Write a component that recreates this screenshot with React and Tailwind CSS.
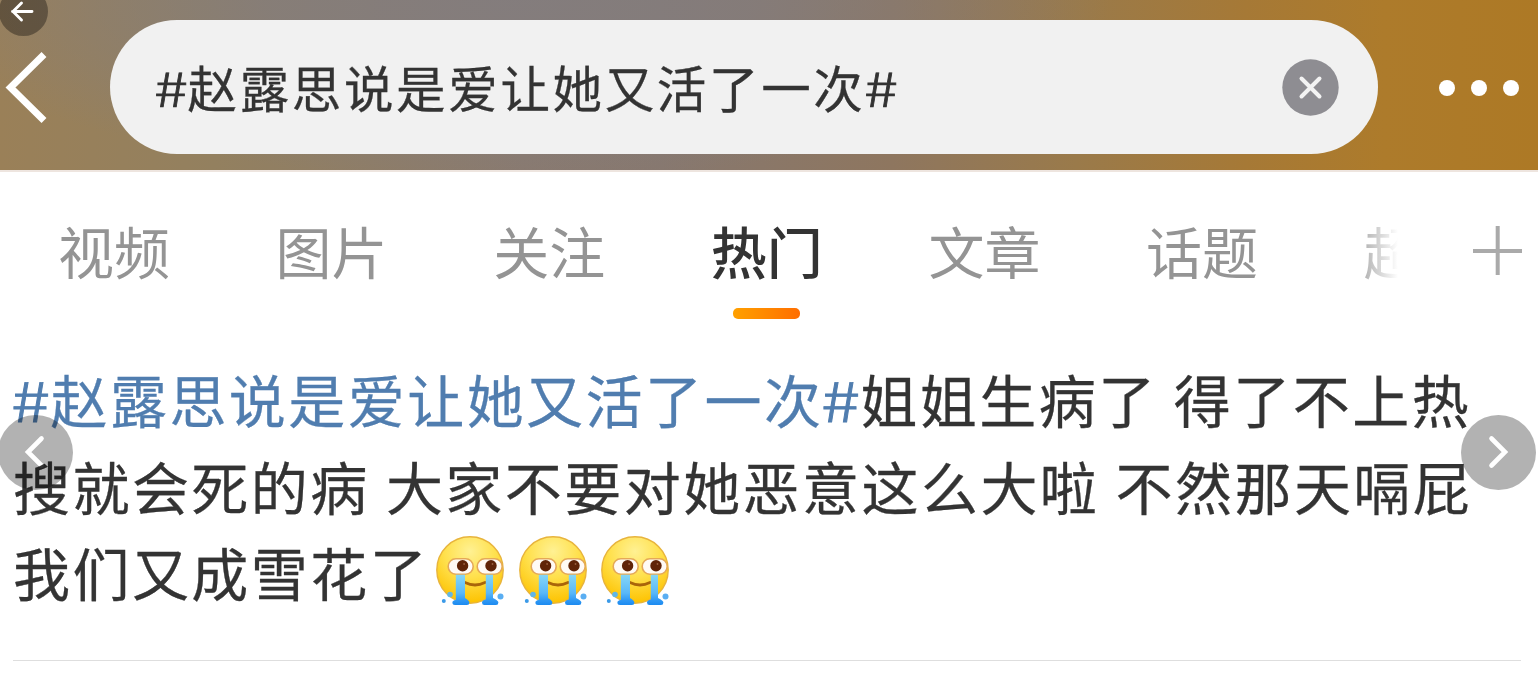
import React from "react";

const tabs = ["视频", "图片", "关注", "热门", "文章", "话题"];

function CryingFace({ id }) {
  return (
    <svg className="block h-[80px] w-[82.5px] shrink-0" viewBox="0 0 82.5 80" aria-hidden="true">
      <defs>
        <radialGradient id={`face${id}`} cx="50%" cy="22%" r="78%">
          <stop offset="0" stopColor="#fff193" />
          <stop offset="0.5" stopColor="#ffe04c" />
          <stop offset="1" stopColor="#fdc200" />
        </radialGradient>
        <linearGradient id={`tear${id}`} x1="0" y1="0" x2="0" y2="1">
          <stop offset="0" stopColor="#86d6f6" />
          <stop offset="0.6" stopColor="#5ab8f8" />
          <stop offset="0.85" stopColor="#2f98f4" />
          <stop offset="1" stopColor="#1c8af0" />
        </linearGradient>
      </defs>
      <circle cx="40" cy="39" r="33.2" fill={`url(#face${id})`} stroke="#e8b43c" strokeWidth="1.4" />
      <path d="M35 51.5 Q45 56.5 55 51.5" fill="none" stroke="#a9650a" strokeWidth="2.8" strokeLinecap="round" />
      <rect x="18.2" y="27.8" width="25" height="15.4" rx="7.7" fill="#fffaf5" stroke="#e5a957" strokeWidth="1.6" />
      <rect x="47.2" y="27.8" width="25" height="15.4" rx="7.7" fill="#fffaf5" stroke="#e5a957" strokeWidth="1.6" />
      <circle cx="32.6" cy="34.8" r="5.7" fill="#602408" />
      <circle cx="61" cy="34.8" r="5.7" fill="#602408" />
      <circle cx="34.1" cy="33" r="0.9" fill="#9a6040" />
      <circle cx="62.5" cy="33" r="0.9" fill="#9a6040" />
      <path d="M25.8 43.8 H35 V67 Q39.4 69.5 39.4 71.5 Q39.4 74 37 74 H25 Q22.4 74 22.4 71.5 Q22.4 69.5 25.8 69 Z" fill={`url(#tear${id})`} />
      <path d="M55.8 43.8 H63 V67 Q68.4 69.5 68.4 71.5 Q68.4 74 66 74 H54.4 Q52 74 52 71.5 Q52 69.5 55.8 68.5 Z" fill={`url(#tear${id})`} />
      <circle cx="20" cy="63.5" r="2.8" fill="#61b6e6" />
      <circle cx="13.8" cy="70" r="2" fill="#3b9ae8" />
      <circle cx="70.5" cy="65.5" r="3" fill="#5aaef2" />
    </svg>
  );
}

function Header() {
  return (
    <header className="flex h-[170px] items-start bg-[radial-gradient(ellipse_600px_180px_at_510px_0px,rgba(131,125,126,0.9)_0%,rgba(131,125,126,0.75)_40%,rgba(131,125,126,0)_100%),linear-gradient(90deg,#9a8058_0%,#93805f_14%,#897a70_34%,#87786f_43%,#8e765f_58%,#9a7a4a_70%,#a67936_81%,#ad7b2b_90%,#ad7925_100%)]">
      <svg className="mt-[48px] h-[80px] w-[110px] shrink-0" viewBox="0 48 110 80" fill="none" stroke="#fff">
        <path d="M44 54.5 L10.5 87.5 L44 120.5" strokeWidth="7" />
      </svg>
      <div className="mt-[20px] flex h-[134px] w-[1268px] shrink-0 items-center rounded-[67px] bg-[#f1f1f1]">
        <div className="-mt-[1px] flex flex-1 items-center pl-[45px] text-[49.5px] leading-[70px] whitespace-nowrap text-[#333] [-webkit-text-stroke:0.3px_#333]">
          <span className="-ml-[1px] inline-block w-[33.5px] origin-left scale-x-[1.28] scale-y-[0.96] font-light [-webkit-text-stroke:0.7px_#333]">#</span>
          <span className="tracking-[2.65px]">赵露思说是爱让她又活了一次</span>
          <span className="-ml-[1px] inline-block origin-left scale-x-[1.28] scale-y-[0.96] font-light [-webkit-text-stroke:0.7px_#333]">#</span>
        </div>
        <svg className="mr-[39px] h-[57px] w-[57px] shrink-0" viewBox="0 0 57 57">
          <circle cx="28.5" cy="28.5" r="28.2" fill="#8e8d92" />
          <path d="M19.5 19.5 L37.5 37.5 M37.5 19.5 L19.5 37.5" stroke="#f3f3f3" strokeWidth="4" strokeLinecap="round" />
        </svg>
      </div>
      <div className="mt-[80px] ml-[61px] flex gap-[16px]">
        <i className="size-[16px] rounded-full bg-white" />
        <i className="size-[16px] rounded-full bg-white" />
        <i className="size-[16px] rounded-full bg-white" />
      </div>
    </header>
  );
}

export default function App() {
  return (
    <main className="relative flex h-[690px] w-[1538px] flex-col overflow-hidden bg-white font-['Noto_Sans_CJK_SC',sans-serif]">
      <Header />
      <nav className="flex h-[180px] border-t-2 border-[#eee5df] pl-[58px] text-[56px] leading-[80px] text-[#949494]">
        {tabs.map((tab) => (
          <div key={tab} className="flex w-[217.6px] shrink-0 flex-col items-start pt-[38px]">
            {tab === "热门" ? (
              <div className="flex flex-col items-center">
                <span className="font-medium text-[#333]">{tab}</span>
                <i className="mt-[18px] h-[11px] w-[67px] rounded-[5px] bg-linear-to-r from-[#ffa000] to-[#ff6d00]" />
              </div>
            ) : (
              <span>{tab}</span>
            )}
          </div>
        ))}
        <div className="mt-[38px] w-[56px] shrink-0">
          <span className="bg-linear-to-r from-[#b4b4b4] to-white to-[34px] bg-clip-text text-transparent">超</span>
        </div>
        <svg className="mt-[54px] ml-[53px] h-[50px] w-[50px] shrink-0" viewBox="0 0 50 50" stroke="#aaa" strokeWidth="4">
          <path d="M0 25 H49 M24.7 0 V49" />
        </svg>
      </nav>
      <article className="flex h-[310px] flex-col pt-[5px] pl-[13px] text-[57px] leading-[86.5px] tracking-[2.45px] [word-spacing:1px] whitespace-nowrap text-[#333] [-webkit-text-stroke:0.3px_currentColor]">
        <div className="flex">
          <span className="flex text-[#507daf]">
            <span className="-ml-[2px] inline-block w-[39.5px] origin-left scale-x-[1.28] scale-y-[0.96] font-light tracking-normal [-webkit-text-stroke:0.8px_#507daf]">#</span>
            <span>赵露思说是爱让她又活了一次</span>
            <span className="-ml-[2px] inline-block w-[39px] origin-left scale-x-[1.28] scale-y-[0.96] font-light tracking-normal [-webkit-text-stroke:0.8px_#507daf]">#</span>
          </span>
          <span>姐姐生病了 得了不上热</span>
        </div>
        <div>搜就会死的病 大家不要对她恶意这么大啦 不然那天嗝屁</div>
        <div className="flex items-center">
          <span>我们又成雪花了</span>
          <span className="flex pl-[1px]">
            <CryingFace id="1" />
            <CryingFace id="2" />
            <CryingFace id="3" />
          </span>
        </div>
        <hr className="mt-[45px] w-[1508px] border-t-[1px] border-[#dedede]" />
      </article>

      <svg className="absolute top-[-13px] left-[-1px] size-[49px]" viewBox="0 0 49 49" fill="none">
        <circle cx="24.5" cy="24.5" r="24.5" fill="#000" fillOpacity="0.34" />
        <path d="M33 24.5 H13.5 M22.5 16 L14 24.5 L22.5 33" stroke="#fff" strokeWidth="2.9" strokeLinecap="round" strokeLinejoin="round" />
      </svg>
      <svg className="absolute top-[414.5px] left-[-2px] size-[75px] mix-blend-multiply" viewBox="0 0 75 75" fill="none">
        <circle cx="37.5" cy="37.5" r="37.5" fill="#b2b2b2" />
        <path d="M43.5 23.5 L30 37 L43.5 50.5" stroke="#fff" strokeWidth="4.6" strokeLinecap="round" />
      </svg>
      <svg className="absolute top-[414.5px] left-[1461px] size-[75px] mix-blend-multiply" viewBox="0 0 75 75" fill="none">
        <circle cx="37.5" cy="37.5" r="37.5" fill="#b2b2b2" />
        <path d="M30.5 23.5 L44 37 L30.5 50.5" stroke="#fff" strokeWidth="4.6" strokeLinecap="round" />
      </svg>
    </main>
  );
}
